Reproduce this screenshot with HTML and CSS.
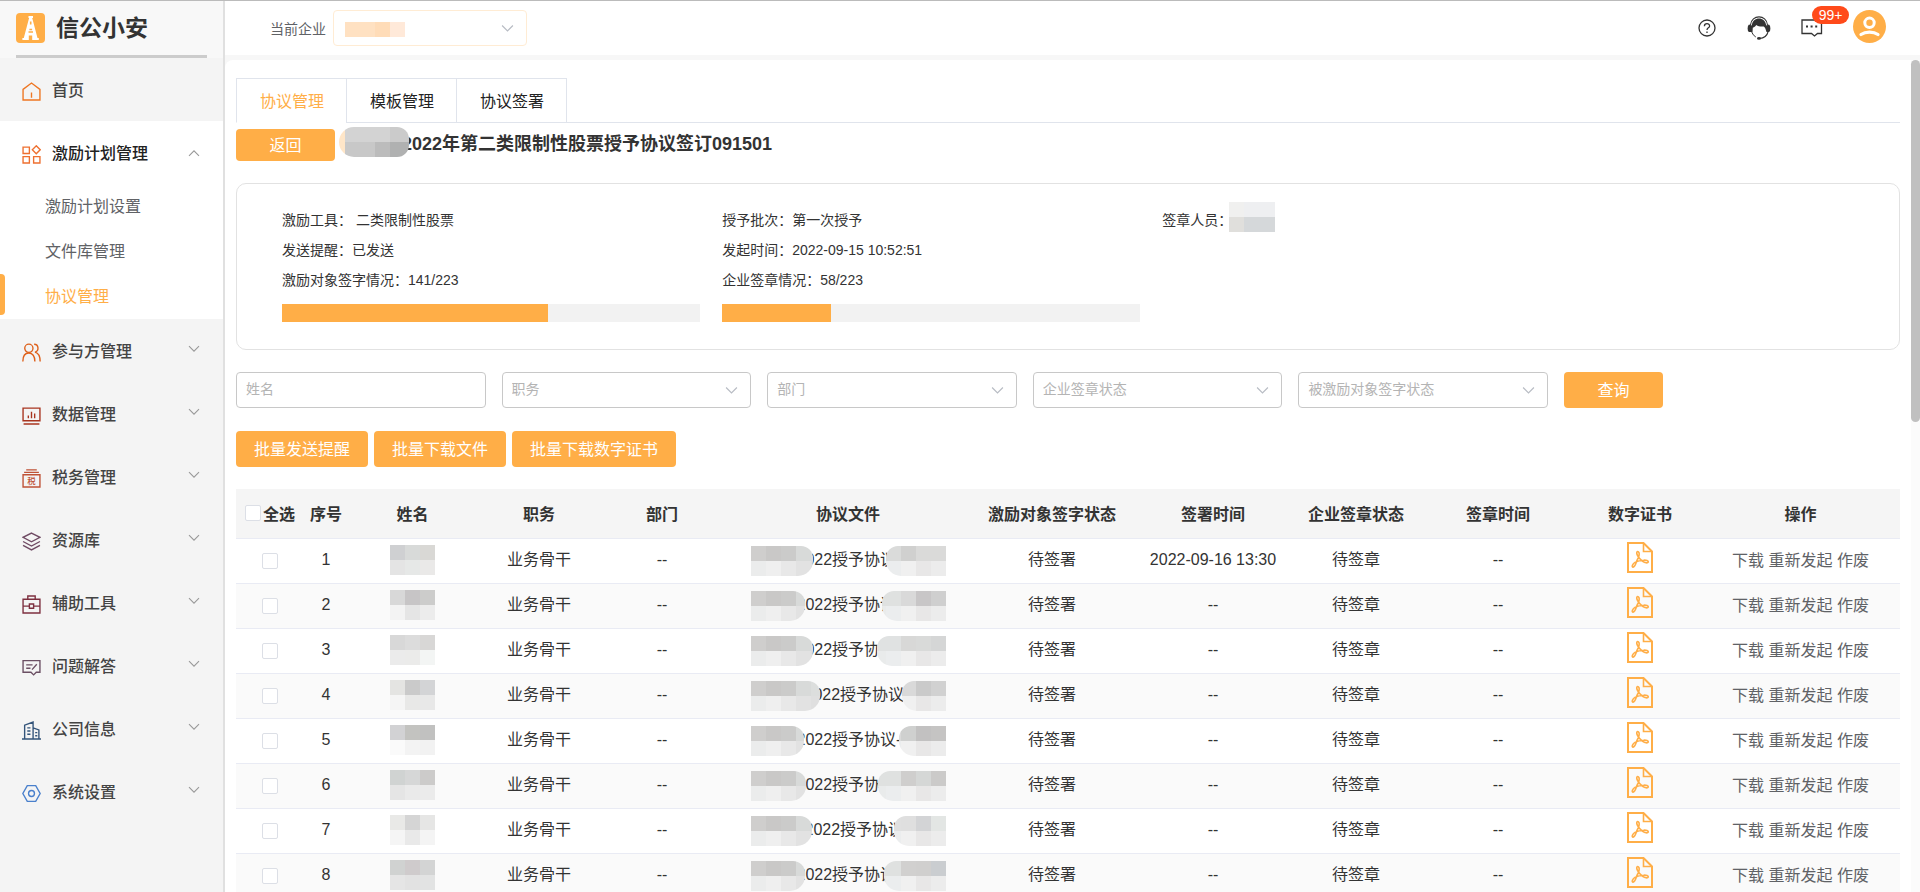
FILE: index.html
```html
<!DOCTYPE html>
<html lang="zh-CN">
<head>
    <meta charset="UTF-8">
    <meta name="viewport" content="width=device-width, initial-scale=1.0">
    <title>信公小安 - 协议管理</title>
    <link rel="stylesheet" href="styles.css">
</head>
<body>

    <svg class="sprite" aria-hidden="true">
        <symbol id="arrow" viewBox="0 0 12 8"><path d="M1 1.2l5 5 5-5" fill="none" stroke="currentColor" stroke-width="1.1"/></symbol>
        <symbol id="pdf" viewBox="0 0 26 31">
            <g fill="none" stroke="#ffae47">
                <path d="M1 1h15.500l8.500 8.500V30H1z" stroke-width="2"/>
                <path d="M16.500 1v8.500H25" stroke-width="1.600"/>
                <path d="M10.500 9.500c1.600 0 2 1.900 1.500 4.200-.4 1.400-1 2.800-1.800 4.300-1.200 2.300-1.800 6.800-4.200 7.200-1.500-.4-.6-3.300 2-4.800 2.500-1.400 5.500-2.100 8.600-2.200 2.800-.2 4.900.4 4.700 1.700-.6 1.600-3.600.9-5.600-.5-1.900-1.400-3.700-3.200-5-5.500-.9-1.700-1.600-4-.2-4.400z" stroke-width="1.600"/>
            </g>
        </symbol>
    </svg>

    <div class="layout">
        <aside class="sidebar">
            <div class="brand">
                <svg class="brand-logo" viewBox="0 0 29 30">
                    <rect width="29" height="30" rx="4" fill="#ffae47"/>
                    <path d="M12.500 3h4.500v2h-.8l5.300 20h1.300v2h-6.600v-4.500h-3.400V27H6.400v-2h1.400l5.300-20h-.6z" fill="#fff"/>
                    <path d="M14.700 8.500v3M13.400 16.500h2.700M12.500 19h4.500" stroke="#ffae47" stroke-width="1.600"/>
                </svg>
                <span class="brand-name">信公小安</span>
            </div>
            <nav>
                <a href="#" class="menu-item">
                    <svg class="menu-icon" viewBox="0 0 18 18" stroke="#ee7622"><path d="M1 7l8-6 8 6v10H1zM9 10v5"/></svg>
                    <span>首页</span>
                </a>
                <div class="menu-open">
                    <a href="#" class="menu-item">
                        <svg class="menu-icon" viewBox="0 0 18 18" stroke="#ee7030"><path d="M1 2h6v6H1zM1 11h6v6H1zM11 11h6v6h-6zM13.500 .8l3.700 3.700-3.700 3.700-3.700-3.700z"/></svg>
                        <span>激励计划管理</span>
                        <svg class="menu-arrow up"><use href="#arrow"/></svg>
                    </a>
                    <a href="#" class="sub-item">激励计划设置</a>
                    <a href="#" class="sub-item">文件库管理</a>
                    <a href="#" class="sub-item active">协议管理</a>
                </div>
                <a href="#" class="menu-item">
                    <svg class="menu-icon" viewBox="0 0 18 18" stroke="#de601a"><circle cx="6.500" cy="5" r="3.900"/><path d="M.8 17.500c0-5 2.200-8 5.700-8s5.700 3 5.700 8M11.500 1.200c4.600 0 4.800 6.600.8 7.400 3 .7 4.900 3.800 4.900 8.900"/></svg>
                    <span>参与方管理</span>
                    <svg class="menu-arrow"><use href="#arrow"/></svg>
                </a>
                <a href="#" class="menu-item">
                    <svg class="menu-icon" viewBox="0 0 18 18" stroke="#a8341f"><path d="M1 2h16v12H1zM1.500 17h15M6 11.500V9M9 11.500V5.500M12 11.500V7"/></svg>
                    <span>数据管理</span>
                    <svg class="menu-arrow"><use href="#arrow"/></svg>
                </a>
                <a href="#" class="menu-item">
                    <svg class="menu-icon" viewBox="0 0 18 18" stroke="#bf5236"><path d="M4 .8h10M2 3.200h14M1 5.500h16V17H1z"/><text x="9" y="14.300" class="tax-char">税</text></svg>
                    <span>税务管理</span>
                    <svg class="menu-arrow"><use href="#arrow"/></svg>
                </a>
                <a href="#" class="menu-item">
                    <svg class="menu-icon" viewBox="0 0 18 18" stroke="#6f4a63"><path d="M9 1l8 4-8 4.300L1 5zM1 9l8 4.300L17 9M1 12.700L9 17l8-4.300"/></svg>
                    <span>资源库</span>
                    <svg class="menu-arrow"><use href="#arrow"/></svg>
                </a>
                <a href="#" class="menu-item">
                    <svg class="menu-icon" viewBox="0 0 18 18" stroke="#7d2f3f"><path d="M1 4h16v13H1zM5.500 4V1h7v3M1 10.500h6M11 10.500h6M7 8.500h4v4H7z"/></svg>
                    <span>辅助工具</span>
                    <svg class="menu-arrow"><use href="#arrow"/></svg>
                </a>
                <a href="#" class="menu-item">
                    <svg class="menu-icon" viewBox="0 0 18 18" stroke="#6b4f63"><path d="M1 2.500h16v11h-3.500L11 16l-2.500-2.500H1zM4 6.500h6M4 9.700h4M9.500 11l4.500-5"/></svg>
                    <span>问题解答</span>
                    <svg class="menu-arrow"><use href="#arrow"/></svg>
                </a>
                <a href="#" class="menu-item">
                    <svg class="menu-icon" viewBox="0 0 18 18" stroke="#33547a"><path d="M0 17h18M2.500 17V4l8-3v16M10.500 6.500l5.500 2V17M5 6.500h3M5 9.500h3M5 12.500h3M12.500 11h2M12.500 14h2"/></svg>
                    <span>公司信息</span>
                    <svg class="menu-arrow"><use href="#arrow"/></svg>
                </a>
                <a href="#" class="menu-item">
                    <svg class="menu-icon" viewBox="0 0 18 18" stroke="#4a80cc"><path d="M5 1.500h8L17.200 9 13 16.500H5L.8 9z"/><circle cx="9" cy="9" r="2.800"/></svg>
                    <span>系统设置</span>
                    <svg class="menu-arrow"><use href="#arrow"/></svg>
                </a>
            </nav>
        </aside>

        <div class="page">
            <header class="topbar">
                <label for="company">当前企业</label>
                <div class="company-box">
                    <select id="company"></select>
                    <span class="company-mask"></span>
                    <svg class="select-arrow"><use href="#arrow"/></svg>
                </div>
                <div class="tools">
                    <button class="tool" aria-label="帮助">
                        <svg width="20" height="20" viewBox="0 0 20 20" fill="none" stroke="#333" stroke-width="1.300"><circle cx="10" cy="10" r="8"/><path d="M7.400 8.200c0-3.500 5.200-3.400 5.200-.3 0 1.900-2.600 1.900-2.600 4M10 13.500v1.500"/></svg>
                    </button>
                    <button class="tool" aria-label="客服">
                        <svg width="24" height="24" viewBox="0 0 24 24">
                            <path d="M3.500 9C4.500-1.800 19.500-1.800 20.500 9" fill="none" stroke="#333" stroke-width="1.100"/>
                            <path d="M4.800 9.500C5.500 0 18.500 0 19.200 9.500L22 8.500q1.400 1 1.400 4T22 16h-2.500l-1-3c-.3-1.200-1-2-1.800-2.500-3.200.3-5.700-.3-7.500-1.500-.8 1.400-2 2.300-3.400 2.800L5.500 16H2q-1.400-.5-1.400-3.500t1.400-4z" fill="#333"/>
                            <path d="M4.500 15.500q1.300 3.800 4.300 5.500" fill="none" stroke="#333" stroke-width="1"/>
                            <path d="M21 16c-1 4-4 6-8.500 6.500" fill="none" stroke="#333" stroke-width="1.100"/>
                            <ellipse cx="12" cy="22.400" rx="2" ry="1.400" fill="#333"/>
                        </svg>
                    </button>
                    <button class="tool" aria-label="消息">
                        <svg width="22" height="20" viewBox="0 0 22 20"><path d="M1 2h19.500v13.500h-4l-3 2.500-3-2.500H1z" fill="none" stroke="#333" stroke-width="1.300"/><path d="M5 7.500h2v2H5zM9.600 7.500h2v2h-2zM14.200 7.500h2v2h-2z" fill="#333"/></svg>
                        <span class="badge">99+</span>
                    </button>
                    <button class="tool avatar" aria-label="用户">
                        <svg width="33" height="33" viewBox="0 0 33 33"><circle cx="16.500" cy="16.500" r="16.500" fill="#ffae47"/><circle cx="16.500" cy="12.800" r="4.700" fill="none" stroke="#fff" stroke-width="3"/><path d="M8 24.500c4.500-3.300 12.500-3.300 17 0" fill="none" stroke="#fff" stroke-width="3.200" stroke-linecap="round"/></svg>
                    </button>
                </div>
            </header>

            <div class="main-wrap">
                <main class="main">
                    <div class="tabs">
                        <button class="tab active">协议管理</button>
                        <button class="tab">模板管理</button>
                        <button class="tab">协议签署</button>
                    </div>

                    <div class="title-row">
                        <button class="btn btn-back">返回</button>
                        <h2 class="title">2022年第二类限制性股票授予协议签订091501<span class="title-mask"></span></h2>
                    </div>

                    <section class="card">
                        <div class="card-col">
                            <p>激励工具： 二类限制性股票</p>
                            <p>发送提醒：已发送</p>
                            <p>激励对象签字情况：141/223</p>
                            <div class="bar"><div class="bar-fill" style="width: 63.6%"></div></div>
                        </div>
                        <div class="card-col">
                            <p>授予批次：第一次授予</p>
                            <p>发起时间：2022-09-15 10:52:51</p>
                            <p>企业签章情况：58/223</p>
                            <div class="bar"><div class="bar-fill" style="width: 26%"></div></div>
                        </div>
                        <div class="card-col">
                            <p class="signer">签章人员：<span class="signer-mask"></span></p>
                        </div>
                    </section>

                    <form class="filters">
                        <div class="field"><input type="text" placeholder="姓名" aria-label="姓名"></div>
                        <div class="field">
                            <select aria-label="职务"><option>职务</option></select>
                            <svg class="select-arrow"><use href="#arrow"/></svg>
                        </div>
                        <div class="field">
                            <select aria-label="部门"><option>部门</option></select>
                            <svg class="select-arrow"><use href="#arrow"/></svg>
                        </div>
                        <div class="field">
                            <select aria-label="企业签章状态"><option>企业签章状态</option></select>
                            <svg class="select-arrow"><use href="#arrow"/></svg>
                        </div>
                        <div class="field">
                            <select aria-label="被激励对象签字状态"><option>被激励对象签字状态</option></select>
                            <svg class="select-arrow"><use href="#arrow"/></svg>
                        </div>
                        <button type="button" class="btn btn-search">查询</button>
                    </form>

                    <div class="bulk">
                        <button class="btn">批量发送提醒</button>
                        <button class="btn">批量下载文件</button>
                        <button class="btn">批量下载数字证书</button>
                    </div>

                    <table class="list">
                        <colgroup>
                            <col class="w-check"><col class="w-no"><col class="w-name"><col class="w-job">
                            <col class="w-dept"><col class="w-file"><col class="w-sign"><col class="w-time">
                            <col class="w-corp"><col class="w-stamp"><col class="w-cert"><col class="w-op">
                        </colgroup>
                        <thead>
                            <tr>
                                <th><label class="check-all"><input type="checkbox" class="check">全选</label></th>
                                <th>序号</th>
                                <th>姓名</th>
                                <th>职务</th>
                                <th>部门</th>
                                <th>协议文件</th>
                                <th>激励对象签字状态</th>
                                <th>签署时间</th>
                                <th>企业签章状态</th>
                                <th>签章时间</th>
                                <th>数字证书</th>
                                <th>操作</th>
                            </tr>
                        </thead>
                        <tbody id="rows"></tbody>
                    </table>
                </main>
                <div class="scroll"><div class="scroll-thumb"></div></div>
            </div>
        </div>
    </div>

    <script>
        // name: 姓名遮罩颜色; left / right: 文件名两侧遮罩的宽度
        const rows = [
            { time: "2022-09-16 13:30", file: "2022授予协议", left: 62, right: 60, name: ["#cfd0d2", "#d8dad9", "#d9d8d5", "#e4e4e4", "#e6e8e7", "#eae9e8"], tone: ["#dadbda", "#d0d0cf", "#dadad9", "#dadad9"] },
            { time: "--", file: "2022授予协议", left: 54, right: 64, name: ["#d8d8d8", "#c7c5c6", "#cccccb", "#f3f3f3", "#e5e5e5", "#ececec"], tone: ["#dfe1e0", "#d9d9d9", "#c8c6c7", "#cfcfcf"] },
            { time: "--", file: "2022授予协议", left: 62, right: 69, name: ["#d8d8d8", "#dcdcdc", "#d8d7d6", "#ebebeb", "#ebebea", "#f3f5f4"], tone: ["#e0e2e2", "#d8d8d7", "#d9dad9", "#d5d6d6"] },
            { time: "--", file: "2022授予协议", left: 69, right: 44, shift: true, name: ["#e4e4e2", "#cacaca", "#d3d4d6", "#f5f5f5", "#e8e8e7", "#e8e8e8"], tone: ["#dadada", "#d9d9d9", "#cacaca", "#d1d1d1"] },
            { time: "--", file: "2022授予协议-", left: 53, right: 47, name: ["#d2d2d4", "#c3c3c0", "#c1c1c0", "#fafafa", "#f3f3f3", "#f2f2f2"], tone: ["#dadada", "#cfd0cf", "#c2c1c1", "#c5c4c3"] },
            { time: "--", file: "2022授予协议", left: 55, right: 68, name: ["#d0d3d2", "#d6d7d7", "#cccbca", "#e5e5e5", "#eaeaea", "#ebebeb"], tone: ["#dfe1e0", "#cfcecd", "#d5d7d6", "#cbcac9"] },
            { time: "--", file: "2022授予协议", left: 61, right: 52, shift: true, name: ["#e9e9e7", "#d5d5d5", "#e6e6e5", "#f5f5f5", "#e9e9e9", "#f4f4f4"], tone: ["#e0e0e0", "#dfdfdf", "#d3d4d6", "#e3e6e4"] },
            { time: "--", file: "2022授予协议", left: 54, right: 62, name: ["#d0d2d1", "#cfcbcc", "#d3d4d4", "#e5e5e5", "#e2e2e2", "#e2e3e3"], tone: ["#dfe1e0", "#d1d0cf", "#d0cfce", "#cacdd0"] }
        ];

        function mosaic(colors) {
            return colors.map(c => `<i style="background: ${c}"></i>`).join("");
        }

        const leftMosaic = mosaic(["#cfcecd", "#c9c8c7", "#cbcbca", "#d8dad9", "#dcdedd", "#ebecec", "#efefef", "#e8e8e8", "#e2e2e2", "#dfdfdf"]);
        const lowTone = ["#ebedee", "#f0f0f0", "#e8e7e7", "#ececec"];

        document.getElementById("rows").innerHTML = rows.map((r, i) => `
            <tr>
                <td class="pick"><input type="checkbox" class="check" aria-label="选择第${i + 1}行"></td>
                <td>${i + 1}</td>
                <td><span class="mosaic name-mask">${mosaic(r.name)}</span></td>
                <td>业务骨干</td>
                <td>--</td>
                <td>
                    <div class="file ${r.shift ? "shift" : ""}">${r.file}
                        <span class="file-mask left" style="width: ${r.left}px"><span class="mosaic">${leftMosaic}</span></span>
                        <span class="file-mask right" style="width: ${r.right}px"><span class="mosaic">${mosaic([r.tone[0], ...r.tone, "#e9ebeb", ...lowTone])}</span></span>
                    </div>
                </td>
                <td>待签署</td>
                <td>${r.time}</td>
                <td>待签章</td>
                <td>--</td>
                <td class="cert"><a href="#" aria-label="数字证书"><svg class="pdf"><use href="#pdf"/></svg></a></td>
                <td class="op"><a href="#">下载</a> <a href="#">重新发起</a> <a href="#">作废</a></td>
            </tr>`).join("");
    </script>

</body>
</html>
```
FILE: styles.css
```css
* {
    box-sizing: border-box;
}
body {
    margin: 0;
    height: 100vh;
    overflow: hidden;
    border-top: 1px solid #bbb;
    background: #fff;
    color: #333;
    font-family: "Liberation Sans", "Noto Sans CJK SC", sans-serif;
    font-size: 16px;
}
a {
    color: inherit;
    text-decoration: none;
}
button, input, select {
    font-family: inherit;
    font-size: inherit;
}
button {
    padding: 0;
    border: none;
    background: none;
    cursor: pointer;
}
.sprite {
    display: none;
}
.layout {
    display: flex;
    height: 100%;
}

/* 左侧菜单 */
.sidebar {
    width: 225px;
    flex-shrink: 0;
    background: #f4f4f4;
    border-right: 2px solid #e0e0e0;
}
.brand {
    display: flex;
    align-items: center;
    height: 57px;
    margin: 0 16px;
    border-bottom: 3px solid #ccc;
    box-shadow: 0 0 0 16px #f8f8f8;
    background: #f8f8f8;
    clip-path: inset(0 -16px);
}
.brand-logo {
    width: 29px;
    height: 30px;
    margin-right: 11px;
}
.brand-name {
    font-size: 23px;
    font-weight: bold;
    line-height: 30px;
}
.menu-item {
    display: flex;
    align-items: center;
    height: 63px;
    padding: 0 23px 0 22px;
    color: #444;
    font-weight: 500;
}
.menu-item span {
    padding-bottom: 2px;
}
.menu-icon {
    width: 19px;
    height: 19px;
    margin: 3px 11px 0 0;
    fill: none;
    stroke-width: 1.3;
}
.tax-char {
    font-size: 8px;
    text-anchor: middle;
    fill: #bf5236;
    stroke: none;
}
.menu-arrow {
    width: 12px;
    height: 8px;
    margin: 0 0 4px auto;
    color: #999;
}
.menu-arrow.up {
    margin-bottom: 0;
    transform: rotate(180deg);
}
.menu-open {
    background: #fff;
}
.menu-open .menu-item {
    color: #222;
}
.sub-item {
    display: block;
    padding-left: 45px;
    line-height: 45px;
    color: #606266;
}
.sub-item.active {
    position: relative;
    color: #ffae47;
}
.sub-item.active::before {
    content: "";
    position: absolute;
    left: 0;
    top: 0;
    width: 5px;
    height: 41px;
    border-radius: 0 4px 4px 0;
    background: #ffae47;
}

/* 顶部 */
.page {
    display: flex;
    flex: 1;
    flex-direction: column;
    min-width: 0;
    background: #f7f7f7;
}
.topbar {
    display: flex;
    align-items: center;
    height: 54px;
    flex-shrink: 0;
    padding: 0 34px 0 45px;
    background: #fff;
    color: #606266;
    font-size: 14px;
}
.company-box {
    position: relative;
    width: 194px;
    margin-left: 7px;
}
.company-box select {
    display: block;
    width: 100%;
    height: 36px;
    border: 1px solid #ffecd4;
    border-radius: 4px;
    background: #fff;
    appearance: none;
}
.company-mask {
    position: absolute;
    left: 12px;
    top: 12px;
    width: 60px;
    height: 15px;
    background: linear-gradient(90deg, #ffe1c2 30px, #ffdcb8 30px 45px, #ffe9d9 45px);
}
.select-arrow {
    position: absolute;
    right: 13px;
    top: 14px;
    width: 13px;
    height: 9px;
    color: #b8bcc4;
    pointer-events: none;
}
.tools {
    display: flex;
    align-items: center;
    gap: 30px;
    margin-left: auto;
}
.tool {
    position: relative;
    display: block;
}
.tool svg {
    display: block;
}
.avatar {
    margin-bottom: 4px;
}
.badge {
    position: absolute;
    left: 11px;
    top: -12px;
    width: 37px;
    border-radius: 9px;
    background: #ff4a1a;
    color: #fff;
    font-size: 14px;
    line-height: 18px;
}

/* 内容区 */
.main-wrap {
    display: flex;
    flex: 1;
    min-height: 0;
    margin-top: 5px;
    border-top-left-radius: 8px;
    background: #fff;
}
.main {
    flex: 1;
    min-width: 0;
    padding: 18px 11px 0;
    overflow: hidden;
}
.scroll {
    width: 9px;
    background: #fbfbfb;
}
.scroll-thumb {
    height: 362px;
    border-radius: 5px;
    background: #c0c0c0;
}
.tabs {
    display: flex;
    border-bottom: 1px solid #e0e4ec;
}
.tab {
    height: 45px;
    margin-bottom: -1px;
    padding: 0 22px 2px 23px;
    border: 1px solid #e0e4ec;
    border-right: none;
    color: #222;
}
.tab:last-child {
    border-right: 1px solid #e0e4ec;
}
.tab.active {
    border-bottom-color: #fff;
    color: #ffae47;
}
.btn {
    height: 36px;
    padding: 0 18px 2px;
    border-radius: 4px;
    background: #ffae47;
    color: #fff;
}
.title-row {
    display: flex;
    align-items: center;
    margin-top: 6px;
}
.btn-back {
    width: 99px;
    height: 32px;
}
.title {
    position: relative;
    margin: 0 0 0 10px;
    padding: 0 0 2px 57px;
    font-size: 18px;
    line-height: 28px;
}
.title-mask {
    position: absolute;
    left: -6px;
    top: -3px;
    width: 70px;
    height: 30px;
    border-radius: 15px 12px 12px 15px;
    background:
        linear-gradient(90deg, #ffe6c8 6px, transparent 6px),
        linear-gradient(90deg, #c8c8c8 36px, #bcbcbc 36px 51px, #b0b1b1 51px) 0 15px no-repeat,
        linear-gradient(90deg, #d3d3d3 51px, #cbcbcb 51px);
}
.card {
    display: flex;
    margin-top: 22px;
    padding: 21px 45px 27px;
    border: 1px solid #e2e2e2;
    border-radius: 10px;
    font-size: 14px;
}
.card-col {
    width: 28%;
    padding-right: 22px;
}
.card-col p {
    margin: 0;
    line-height: 30px;
}
.bar {
    height: 18px;
    margin-top: 9px;
    background: #f2f2f2;
}
.bar-fill {
    height: 100%;
    background: #ffae47;
}
.signer {
    position: relative;
}
.signer-mask {
    position: absolute;
    left: 67px;
    top: -3px;
    width: 46px;
    height: 30px;
    background:
        linear-gradient(90deg, #e0dfdc 15px, #d5d8da 15px) 0 15px no-repeat,
        linear-gradient(90deg, #f0f0ef 15px, #eeeff1 15px);
}
.filters {
    display: flex;
    gap: 16px;
    margin-top: 22px;
}
.field {
    position: relative;
    width: 15%;
}
.field input, .field select {
    display: block;
    width: 100%;
    height: 36px;
    padding: 0 9px 2px;
    border: 1px solid #c8c8c8;
    border-radius: 4px;
    background: #fff;
    color: #b4b4b4;
    font-size: 14px;
    appearance: none;
}
.field input::placeholder {
    color: #b4b4b4;
}
.btn-search {
    width: 99px;
}
.bulk {
    display: flex;
    gap: 6px;
    margin-top: 23px;
}

/* 列表 */
.list {
    width: 100%;
    margin-top: 22px;
    border-spacing: 0;
    table-layout: fixed;
    text-align: center;
}
.w-check { width: 68px; }
.w-no { width: 44px; }
.w-name { width: 129px; }
.w-job { width: 124px; }
.w-dept { width: 122px; }
.w-file { width: 250px; }
.w-sign { width: 158px; }
.w-time { width: 164px; }
.w-corp { width: 122px; }
.w-stamp { width: 162px; }
.w-cert { width: 122px; }
.w-op { width: 199px; }
.list th, .list td {
    padding: 0 0 2px;
    border-bottom: 1px solid #e9ebf4;
    white-space: nowrap;
}
.list th {
    height: 50px;
    background: #f5f5f5;
    font-weight: 600;
}
.list td {
    height: 45px;
    line-height: 24px;
}
.list tbody tr:nth-child(even) {
    background: #fafafa;
}
.list .pick, .list .op {
    padding-bottom: 0;
}
.check {
    display: block;
    width: 16px;
    height: 16px;
    margin: 0 auto;
    border: 1px solid #dcdfe6;
    border-radius: 2px;
    background: #fff;
    appearance: none;
}
.check-all {
    display: flex;
    align-items: center;
    justify-content: center;
    gap: 2px;
}
.check-all .check {
    margin: 0;
}
.mosaic {
    display: grid;
    grid-template-columns: repeat(5, 15px);
    grid-auto-rows: 15px;
}
.name-mask {
    grid-template-columns: repeat(3, 15px);
    justify-content: center;
}
.file {
    position: relative;
    width: 195px;
    margin: 0 auto;
    padding-left: 46px;
    text-align: left;
}
.file.shift {
    padding-left: 54px;
}
.file-mask {
    position: absolute;
    top: -2px;
    height: 30px;
    overflow: hidden;
}
.file-mask.left {
    left: 0;
    border-radius: 0 12px 15px 0;
}
.file-mask.right {
    right: 0;
    display: flex;
    justify-content: flex-end;
    border-radius: 12px 0 0 15px;
}
.list .cert {
    padding-top: 3px;
    vertical-align: top;
}
.pdf {
    display: block;
    width: 26px;
    height: 31px;
    margin: 0 auto;
}
.op {
    color: #606266;
}
```
